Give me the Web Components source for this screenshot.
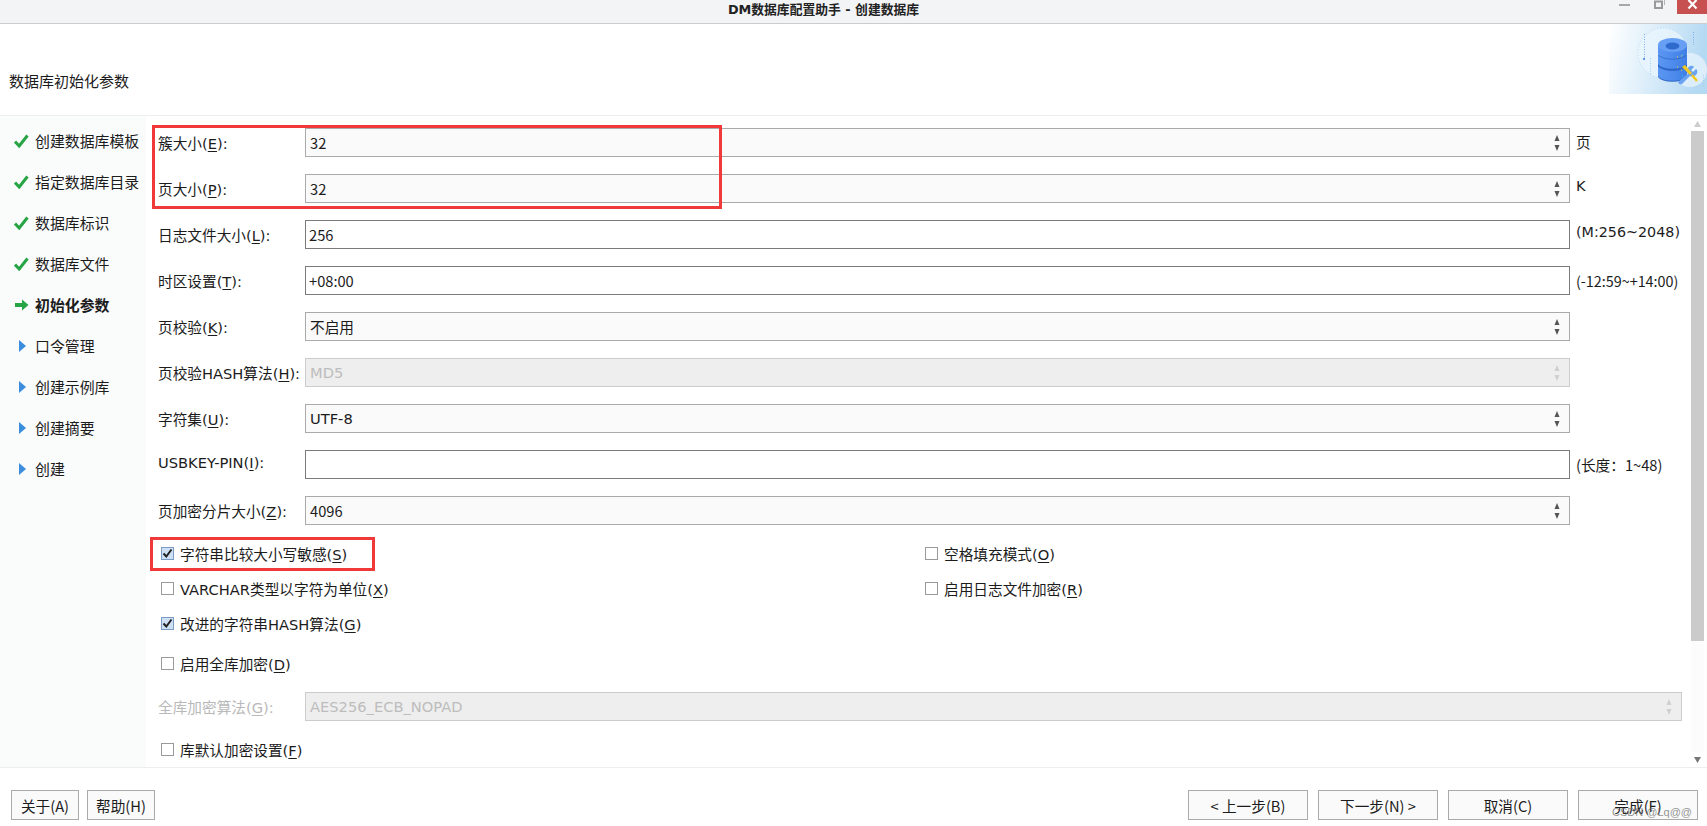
<!DOCTYPE html>
<html lang="zh">
<head>
<meta charset="utf-8">
<title>DM数据库配置助手 - 创建数据库</title>
<style>
  html, body { margin: 0; height: 100%; background: #fff; overflow: hidden; }
  body {
    font: 14.67px "DejaVu Sans", "Noto Sans CJK SC", sans-serif;
    color: #1c1c1c;
  }
</style>
</head>
<body>
<dm-window>
  <dm-titlebar slot="title">DM数据库配置助手 - 创建数据库</dm-titlebar>
  <dm-header slot="header">数据库初始化参数</dm-header>
  <dm-steps slot="steps">
    <dm-step state="done">创建数据库模板</dm-step>
    <dm-step state="done">指定数据库目录</dm-step>
    <dm-step state="done">数据库标识</dm-step>
    <dm-step state="done">数据库文件</dm-step>
    <dm-step state="current">初始化参数</dm-step>
    <dm-step>口令管理</dm-step>
    <dm-step>创建示例库</dm-step>
    <dm-step>创建摘要</dm-step>
    <dm-step>创建</dm-step>
  </dm-steps>
  <dm-form slot="form">
    <dm-field key="E" kind="select" value="32" narrow unit="页">簇大小</dm-field>
    <dm-field key="P" kind="select" value="32" narrow unit="K" unit-top="2">页大小</dm-field>
    <dm-field key="L" kind="input" value="256" narrow unit="(M:256~2048)" unit-top="2" unit-size="14.3">日志文件大小</dm-field>
    <dm-field key="T" kind="input" value="+08:00" narrow unit="(-12:59~+14:00)" unit-narrow unit-size="14.36">时区设置</dm-field>
    <dm-field key="K" kind="select" value="不启用">页校验</dm-field>
    <dm-field key="H" kind="disabled" value="MD5">页校验HASH算法</dm-field>
    <dm-field key="U" kind="select" value="UTF-8">字符集</dm-field>
    <dm-field key="I" kind="input" value="" unit="(长度：1~48)" unit-narrow label-top="3">USBKEY-PIN</dm-field>
    <dm-field key="Z" kind="select" value="4096" narrow>页加密分片大小</dm-field>
    <dm-checks>
      <dm-check key="S" checked>字符串比较大小写敏感</dm-check>
      <dm-check key="O">空格填充模式</dm-check>
      <dm-check key="X">VARCHAR类型以字符为单位</dm-check>
      <dm-check key="R">启用日志文件加密</dm-check>
      <dm-check key="G" checked>改进的字符串HASH算法</dm-check>
      <span></span>
    </dm-checks>
    <dm-check key="D" class="solo">启用全库加密</dm-check>
    <dm-field key="G" kind="disabled" value="AES256_ECB_NOPAD" muted wide>全库加密算法</dm-field>
    <dm-check key="F" class="last">库默认加密设置</dm-check>
    <dm-mark style="left:6px;top:9px;width:564px;height:78px"></dm-mark>
    <dm-mark style="left:4px;top:421px;width:219px;height:28px"></dm-mark>
  </dm-form>
  <dm-scrollbar slot="scroll"></dm-scrollbar>
  <dm-footer slot="footer">
    <dm-button slot="left">关于(A)</dm-button>
    <dm-button slot="left">帮助(H)</dm-button>
    <dm-button>&lt; 上一步(B)</dm-button>
    <dm-button>下一步(N) &gt;</dm-button>
    <dm-button>取消(C)</dm-button>
    <dm-button>完成(F)</dm-button>
  </dm-footer>
</dm-window>

<script>
class DmWindow extends HTMLElement {
  connectedCallback() {
    this.attachShadow({ mode: 'open' });
    this.shadowRoot.innerHTML = `
      <style>
        :host { display: flex; flex-direction: column; height: 826px; width: 1707px; overflow: hidden; }
        .main { flex: 1; min-height: 0; display: flex; border-bottom: 1px solid #eeeeee; }
        .pane { flex: 1; min-width: 0; display: flex; }
      </style>
      <slot name="title"></slot>
      <slot name="header"></slot>
      <div class="main">
        <slot name="steps"></slot>
        <div class="pane"><slot name="form"></slot><slot name="scroll"></slot></div>
      </div>
      <slot name="footer"></slot>
    `;
  }
}

class DmTitlebar extends HTMLElement {
  connectedCallback() {
    this.attachShadow({ mode: 'open' });
    this.shadowRoot.innerHTML = `
      <style>
        :host {
          display: flex; position: relative; flex: none; height: 23px; box-sizing: content-box;
          background: #f3f4f6; border-bottom: 1px solid #cccccc;
          justify-content: center; font-size: 12.8px; font-weight: 700; line-height: 20px; color: #222;
        }
        .title { margin-right: 60px; white-space: nowrap; }
        .controls { position: absolute; right: 0; top: 0; display: flex; align-items: flex-start; }
        .min { width: 11px; height: 2px; background: #a8a8a8; margin: 4px 24px 0 0; }
        .max { display: block; margin-right: 12px; }
        .close { width: 30px; height: 14px; background: #c75050; display: flex; justify-content: center; }
      </style>
      <div class="title"><slot></slot></div>
      <div class="controls">
        <div class="min"></div>
        <svg class="max" width="11" height="9" viewBox="0 0 11 9"><path d="M1 1.500h7v6.500h-7z" fill="none" stroke="#9a9a9a" stroke-width="2"/><path d="M10.500 0v5" stroke="#b5b5b5"/></svg>
        <div class="close"><svg width="11" height="10" viewBox="0 0 11 10"><path d="M1.500 0L9.500 8.500M9.500 0L1.500 8.500" stroke="#fff" stroke-width="2.200"/></svg></div>
      </div>
    `;
  }
}

class DmHeader extends HTMLElement {
  connectedCallback() {
    this.attachShadow({ mode: 'open' });
    this.shadowRoot.innerHTML = `
      <style>
        :host {
          display: flex; flex: none; height: 91px; position: relative; align-items: flex-start;
          background: #fff; border-bottom: 1px solid #eeeeee;
        }
        .text { margin: 47px 0 0 9px; line-height: 22px; font-size: 15px; }
        svg { position: absolute; right: 0; top: 0; display: block; }
      </style>
      <div class="text"><slot></slot></div>
      <svg width="98" height="70" viewBox="0 0 98 70">
        <defs>
          <linearGradient id="bg" x1="0" x2="1" y1="0" y2="0.15">
            <stop offset="0" stop-color="#ffffff"/>
            <stop offset="0.45" stop-color="#dfeffa"/>
            <stop offset="1" stop-color="#b4d9f3"/>
          </linearGradient>
          <linearGradient id="disc" x1="0" x2="1" y1="0" y2="0">
            <stop offset="0" stop-color="#5c97f2"/>
            <stop offset="1" stop-color="#3f7fe6"/>
          </linearGradient>
        </defs>
        <rect width="98" height="70" fill="url(#bg)"/>
        <circle cx="54" cy="29" r="25" fill="#eaf5fd" fill-opacity=".75" stroke="#bcdcf3" stroke-dasharray="1 2"/>
        <circle cx="81" cy="46" r="17" fill="#e6f3fc" fill-opacity=".8"/>
        <path d="M35.500 10v24" stroke="#7aaeea" stroke-dasharray="1 1.500"/>
        <circle cx="35" cy="35" r="1" fill="#3b79d0"/>
        <path d="M84.500 8v13" stroke="#7aaeea" stroke-dasharray="1 1.500"/>
        <path d="M41.500 34v16" stroke="#a5cdee" stroke-dasharray="1 1.500"/>
        <path d="M94.500 51v12" stroke="#a5cdee" stroke-dasharray="1 1.500"/>
        <path d="M49 42a15 6 0 0 1 29 0v11a15 6.500 0 0 1-29 0z" fill="#2e66c4"/>
        <path d="M49 42a15 6 0 0 0 29 0v10a15 6.500 0 0 1-29 0z" fill="url(#disc)"/>
        <path d="M49 31a15 6 0 0 1 29 0v11a15 6.500 0 0 1-29 0z" fill="#2e66c4"/>
        <path d="M49 31a15 6 0 0 0 29 0v9a15 6.500 0 0 1-29 0z" fill="url(#disc)"/>
        <path d="M49 21a15 7 0 0 1 29 0v9a15 6.500 0 0 1-29 0z" fill="url(#disc)"/>
        <ellipse cx="63.500" cy="21" rx="14.500" ry="7" fill="#679ff5"/>
        <ellipse cx="63.500" cy="22" rx="7" ry="3.500" fill="#2f6bcc"/>
        <path d="M68 33h1M72 32h1M68 43h1M72 46h1" stroke="#f0d24a"/>
        <path d="M73 31h1M73 52h1" stroke="#35d2e0"/>
        <path d="M69 58l10-8a5 5 0 0 1 5-8l1 1-3 3 2 2 3-3 1 1a5 5 0 0 1-7 6l-8 8a3 3 0 0 1-4-2z" fill="#6aa2f2"/>
        <path d="M73 43l8 8 2-2-7-8z" fill="#f2c81e"/>
        <path d="M83 51l5 6" stroke="#f2c81e" stroke-width="2.500"/>
      </svg>
    `;
  }
}

class DmSteps extends HTMLElement {
  connectedCallback() {
    this.attachShadow({ mode: 'open' });
    this.shadowRoot.innerHTML = `
      <style>
        :host {
          display: flex; flex-direction: column; flex: none; width: 146px; box-sizing: border-box;
          padding-top: 4px; background: #fafbfb; font-size: 14.9px;
        }
      </style>
      <slot></slot>
    `;
  }
}

const STEP_ICONS = {
  done: '<svg width="15" height="14" viewBox="0 0 15 14" style="margin-left:14px"><path d="M1 7.500L5.200 12 13.500 1.500" fill="none" stroke="#27a545" stroke-width="3"/></svg>',
  current: '<svg width="14" height="12" viewBox="0 0 14 12" style="margin-left:15px"><path d="M0 4h7V0.500L13.500 6 7 11.500V8H0z" fill="#27a545"/></svg>',
  todo: '<svg width="7" height="12" viewBox="0 0 7 12" style="margin-left:19px"><path d="M0 0L7 6 0 12z" fill="#3b8ddd"/></svg>'
};

class DmStep extends HTMLElement {
  connectedCallback() {
    const state = this.getAttribute('state') || 'todo';
    this.attachShadow({ mode: 'open' });
    this.shadowRoot.innerHTML = `
      <style>
        :host { display: flex; flex: none; height: 41px; align-items: center; position: relative; }
        .icon { width: 35px; flex: none; display: flex; align-items: center; height: 14px; }
        .label { white-space: nowrap; font-weight: ${state === 'current' ? 700 : 400}; }
      </style>
      <div class="icon">${STEP_ICONS[state]}</div>
      <div class="label"><slot></slot></div>
    `;
  }
}

class DmForm extends HTMLElement {
  connectedCallback() {
    this.attachShadow({ mode: 'open' });
    this.shadowRoot.innerHTML = `
      <style>
        :host {
          display: flex; flex-direction: column; gap: 17px; flex: 1; min-width: 0; position: relative;
          padding: 12px 9px 0 12px; overflow: hidden;
        }
      </style>
      <slot></slot>
    `;
  }
}

const CJK_FACE = '"Noto Sans CJK SC", sans-serif';

class DmField extends HTMLElement {
  connectedCallback() {
    const kind = this.getAttribute('kind') || 'input';
    const unit = this.getAttribute('unit') || '';
    const value = this.getAttribute('value') || '';
    const wide = this.hasAttribute('wide');
    const spin = kind !== 'input';
    const labelTop = this.getAttribute('label-top') || 6;
    const unitTop = this.getAttribute('unit-top') || 5;
    const unitSize = this.getAttribute('unit-size') || 14.67;
    this.attachShadow({ mode: 'open' });
    this.shadowRoot.innerHTML = `
      <style>
        :host { display: flex; flex: none; height: 29px; align-items: flex-start; }
        .label {
          width: 147px; flex: none; white-space: nowrap; line-height: 20px; margin-top: ${labelTop}px;
          color: ${this.hasAttribute('muted') ? '#b9b9b9' : 'inherit'};
        }
        u { text-underline-offset: 2px; }
        .box {
          flex: 1; min-width: 0; height: 29px; box-sizing: border-box; display: flex; align-items: center;
          justify-content: space-between; padding: 0 9px 0 4px; border: 1px solid #aaaaaa; background: #fafafa;
        }
        .box.input { background: #fff; border-color: #7a7a7a; padding-left: 3px; }
        .box.disabled { background: #eeeeee; border-color: #cccccc; color: #bdbdbd; }
        .value { ${this.hasAttribute('narrow') ? `font-family: ${CJK_FACE};` : ''} }
        .unit {
          width: 106px; flex: none; margin: ${unitTop}px 0 0 6px; white-space: nowrap; line-height: 20px;
          display: ${wide ? 'none' : 'block'}; font-size: ${unitSize}px;
          ${this.hasAttribute('unit-narrow') ? `font-family: ${CJK_FACE};` : ''}
        }
        svg { display: block; flex: none; }
      </style>
      <div class="label"><slot></slot>(<u>${this.getAttribute('key')}</u>):</div>
      <div class="box ${kind}">
        <span class="value">${value}</span>
        ${spin ? `<svg width="6" height="16" viewBox="0 0 6 16"><path d="M3 0L5.500 6H0.500zM3 16L5.500 10H0.500z" fill="${kind === 'disabled' ? '#cfcfcf' : '#555'}"/></svg>` : ''}
      </div>
      <div class="unit">${unit}</div>
    `;
  }
}

class DmChecks extends HTMLElement {
  connectedCallback() {
    this.attachShadow({ mode: 'open' });
    this.shadowRoot.innerHTML = `
      <style>
        :host { display: grid; grid-template-columns: 764px 1fr; row-gap: 15px; margin: 1px 0 0 3px; }
      </style>
      <slot></slot>
    `;
  }
}

class DmCheck extends HTMLElement {
  connectedCallback() {
    const checked = this.hasAttribute('checked');
    this.attachShadow({ mode: 'open' });
    this.shadowRoot.innerHTML = `
      <style>
        :host { display: flex; flex: none; align-items: center; height: 20px; gap: 6px; white-space: nowrap; }
        :host(.solo) { margin: 3px 0 2px 3px; }
        :host(.last) { margin: 1px 0 0 3px; }
        .box {
          width: 13px; height: 13px; flex: none; box-sizing: border-box; border: 1px solid #9a9a9a; background: #fff;
          display: flex;
        }
        .box.on { background: #cfe0f4; border-color: #7b9cc4; }
        u { text-underline-offset: 2px; }
      </style>
      <div class="box ${checked ? 'on' : ''}">
        ${checked ? '<svg width="11" height="11" viewBox="0 0 11 11"><path d="M1.500 5.500L4.300 8.500 9.500 1.500" fill="none" stroke="#222" stroke-width="2"/></svg>' : ''}
      </div>
      <div><slot></slot>(<u>${this.getAttribute('key')}</u>)</div>
    `;
  }
}

// red annotation boxes drawn over the screenshot
class DmMark extends HTMLElement {
  connectedCallback() {
    this.attachShadow({ mode: 'open' });
    this.shadowRoot.innerHTML = `
      <style>
        :host { display: block; position: absolute; border: 3px solid #f03a3a; pointer-events: none; }
      </style>
    `;
  }
}

class DmScrollbar extends HTMLElement {
  connectedCallback() {
    this.attachShadow({ mode: 'open' });
    this.shadowRoot.innerHTML = `
      <style>
        :host { display: flex; flex-direction: column; flex: none; width: 16px; box-sizing: border-box; padding-right: 3px; background: #fff; }
        .arrow { display: flex; justify-content: center; height: 15px; flex: none; align-items: center; }
        .track { flex: 1; background: #fcfcfc; }
        .thumb { height: 510px; background: #cbcbcb; }
      </style>
      <div class="arrow"><svg width="7" height="6" viewBox="0 0 7 6"><path d="M3.500 0L7 6H0z" fill="#cccccc"/></svg></div>
      <div class="track"><div class="thumb"></div></div>
      <div class="arrow"><svg width="7" height="6" viewBox="0 0 7 6"><path d="M3.500 6L7 0H0z" fill="#777"/></svg></div>
    `;
  }
}

class DmFooter extends HTMLElement {
  connectedCallback() {
    this.attachShadow({ mode: 'open' });
    this.shadowRoot.innerHTML = `
      <style>
        :host {
          display: flex; flex: none; height: 58px; box-sizing: border-box; position: relative;
          justify-content: space-between; align-items: flex-start; padding: 22px 9px 0 11px; background: #fff;
        }
        .group { display: flex; gap: 8px; }
        .group.right { gap: 10px; }
        .mark {
          position: absolute; right: 15px; top: 37px; font-size: 11px; line-height: 14px;
          font-family: "Liberation Sans", sans-serif; color: rgba(110, 110, 110, .75); white-space: nowrap;
        }
      </style>
      <div class="group"><slot name="left"></slot></div>
      <div class="group right"><slot></slot></div>
      <div class="mark">CSDN @Lq@@</div>
    `;
  }
}

class DmButton extends HTMLElement {
  connectedCallback() {
    this.attachShadow({ mode: 'open' });
    const small = this.slot === 'left';
    this.shadowRoot.innerHTML = `
      <style>
        :host {
          display: flex; align-items: center; justify-content: center; box-sizing: border-box;
          height: 30px; width: ${small ? 68 : 120}px; border: 1px solid #aaaaaa; background: #fafafa; white-space: nowrap;
          font-family: ${CJK_FACE};
        }
      </style>
      <slot></slot>
    `;
  }
}

customElements.define('dm-window', DmWindow);
customElements.define('dm-titlebar', DmTitlebar);
customElements.define('dm-header', DmHeader);
customElements.define('dm-steps', DmSteps);
customElements.define('dm-step', DmStep);
customElements.define('dm-form', DmForm);
customElements.define('dm-field', DmField);
customElements.define('dm-checks', DmChecks);
customElements.define('dm-check', DmCheck);
customElements.define('dm-mark', DmMark);
customElements.define('dm-scrollbar', DmScrollbar);
customElements.define('dm-footer', DmFooter);
customElements.define('dm-button', DmButton);
</script>
</body>
</html>
